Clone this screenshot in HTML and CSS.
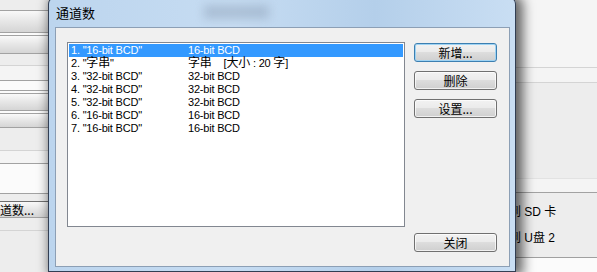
FILE: index.html
```html
<!DOCTYPE html>
<html lang="zh-CN">
<head>
  <meta charset="UTF-8">
  <title>通道数</title>
  <link rel="stylesheet" href="styles.css">
</head>
<body>
  <div class="desktop">
    <!-- Main window behind the dialog -->
    <div class="app">
      <div class="pane-left">
        <div class="row plain"></div>
        <div class="row bar"></div>
        <div class="row white"></div>
        <div class="row bar"></div>
        <div class="row plain soft"></div>
        <div class="row light"></div>
        <div class="row white"></div>
        <div class="row white"></div>
        <div class="row bar"></div>
        <div class="row white"></div>
        <div class="row bar"></div>
        <div class="row plain soft"></div>
        <div class="row light"></div>
        <div class="row white"></div>
        <div class="row plain dark"></div>
        <div class="row bar label">道数...</div>
        <div class="row plain soft"></div>
        <div class="row plain end"></div>
      </div>
      <div class="pane-right">
        <div class="row top soft"></div>
        <div class="row light soft"></div>
        <div class="row plain faint"></div>
        <div class="row light"></div>
        <div class="row plain targets">
          <div class="target">到 SD 卡</div>
          <div class="target">到 U盘 2</div>
        </div>
        <div class="row white end"></div>
      </div>
    </div>

    <!-- Channel count dialog -->
    <div class="dialog">
      <div class="titlebar">通道数</div>
      <div class="client">
        <div class="listbox">
          <div class="item selected"><span class="name">1. "16-bit BCD"</span><span>16-bit BCD</span></div>
          <div class="item"><span class="name">2. "<span class="cjk">字串</span>"</span><span class="cjk">字串</span><span class="size">[<span class="cjk">大小</span> : 20 <span class="cjk">字</span>]</span></div>
          <div class="item"><span class="name">3. "32-bit BCD"</span><span>32-bit BCD</span></div>
          <div class="item"><span class="name">4. "32-bit BCD"</span><span>32-bit BCD</span></div>
          <div class="item"><span class="name">5. "32-bit BCD"</span><span>32-bit BCD</span></div>
          <div class="item"><span class="name">6. "16-bit BCD"</span><span>16-bit BCD</span></div>
          <div class="item"><span class="name">7. "16-bit BCD"</span><span>16-bit BCD</span></div>
        </div>
        <div class="buttons">
          <button class="btn default">新增...</button>
          <button class="btn">删除</button>
          <button class="btn">设置...</button>
          <button class="btn close">关闭</button>
        </div>
      </div>
    </div>
  </div>
</body>
</html>
```
FILE: styles.css
```css
/* Base */
body {
  margin: 0;
  font-family: "Liberation Sans", "Noto Sans CJK SC", sans-serif;
  background: #f0f0f0;
  color: #000;
}
.desktop {
  position: relative;
  width: 597px;
  height: 272px;
  overflow: hidden;
}

/* Window behind */
.app {
  display: flex;
  justify-content: space-between;
  height: 272px;
}
.pane-left {
  width: 48px;
  display: grid;
  grid-template-rows: 11px 22px 3px 18px 12px 15px 10px 3px 17px 3px 14px 23px 13px 30px 8px 16px 13px 1fr;
}
.pane-right {
  width: 117px;
  display: grid;
  grid-template-rows: 68px 15px 96px 14px 65px 1fr;
}
.row {
  box-sizing: border-box;
  border-bottom: 1px solid #a2a2a2;
}
.row.soft { border-bottom-color: #d4d4d4; }
.row.faint { border-bottom-color: #e2e2e2; }
.row.dark { border-bottom-color: #707070; }
.row.end { border-bottom: none; }
.plain { background: #ededed; }
.light { background: #f4f4f4; }
.white { background: #fbfbfb; }
.top { background: #f5f5f5; }
.bar { background: linear-gradient(#f9f9f9, #e6e6e6 50%, #d5d5d5); }
.label {
  font-family: "Noto Sans CJK SC", sans-serif;
  font-size: 12px;
  line-height: 15px;
  white-space: nowrap;
}
.targets {
  padding: 6px 0 0 29px;
  font-size: 12px;
  line-height: 26px;
  white-space: nowrap;
  border-bottom-color: #a0a0a0;
}

/* Dialog */
.dialog {
  position: absolute;
  left: 48px;
  top: -3px;
  width: 468px;
  height: 275px;
  box-sizing: border-box;
  padding: 0 5px 4px 6px;
  border: 1px solid rgba(25, 35, 55, 0.85);
  border-radius: 7px 7px 0 0;
  background: linear-gradient(90deg, #bcd5ee, #c6dcf2 40%, #b4cfea 70%, #c9def3);
  box-shadow: 4px 1px 12px 3px rgba(0, 0, 0, 0.6);
  display: flex;
  flex-direction: column;
}
.dialog::before {
  content: "";
  position: absolute;
  left: 155px;
  top: 7px;
  width: 65px;
  height: 14px;
  background: rgba(110, 125, 150, 0.3);
  filter: blur(5px);
}
.titlebar {
  position: relative;
  height: 29px;
  display: flex;
  align-items: center;
  padding-left: 1px;
  font-family: "Noto Sans CJK SC", sans-serif;
  font-size: 13px;
}
.client {
  height: 240px;
  box-sizing: border-box;
  border: 1px solid #8c9fb5;
  background: #f0f0f0;
  padding: 14px 12px 14px 11px;
  display: grid;
  grid-template-columns: 338px 83px;
  gap: 9px;
}
.listbox {
  height: 185px;
  box-sizing: border-box;
  border: 1px solid #828790;
  background: #fff;
  padding: 1px;
  font-size: 11px;
  letter-spacing: -0.2px;
}
.item {
  display: flex;
  height: 13px;
  line-height: 13px;
  padding-left: 2px;
  white-space: nowrap;
}
.item .name { width: 117px; }
.item .cjk { font-size: 12px; }
.item .size { margin-left: 12px; }
.item.selected {
  background: #3399ff;
  color: #fff;
}
.buttons {
  display: flex;
  flex-direction: column;
  gap: 9px;
  padding-top: 1px;
}
.btn {
  height: 19px;
  padding: 0;
  border: 1px solid #707070;
  border-radius: 3px;
  background: linear-gradient(#f2f2f2, #ebebeb 45%, #dddddd 50%, #cfcfcf);
  box-shadow: inset 0 0 0 1px rgba(255, 255, 255, 0.7);
  font-family: "Noto Sans CJK SC", sans-serif;
  font-size: 12px;
  line-height: 17px;
  color: #000;
}
.btn.default {
  border-color: #3c7fb1;
  box-shadow: inset 0 0 0 1px #9fd3f3;
}
.btn.close { margin-top: auto; }
```
